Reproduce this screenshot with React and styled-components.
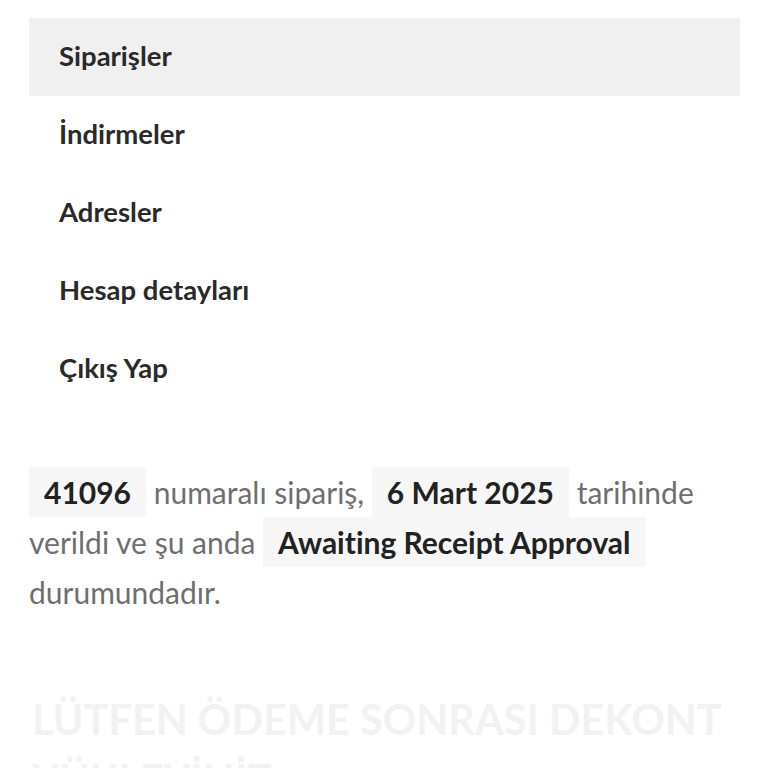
import React from 'react';
import styled, { createGlobalStyle } from 'styled-components';

const GlobalStyle = createGlobalStyle`
  html, body {
    margin: 0;
    padding: 0;
    background: #fff;
  }
  body {
    font-family: Lato, 'Noto Sans', sans-serif;
    -webkit-font-smoothing: antialiased;
    font-variant-ligatures: none;
  }
`;

const navItems = ['Siparişler', 'İndirmeler', 'Adresler', 'Hesap detayları', 'Çıkış Yap'];

export default function App() {
  return (
    <>
      <GlobalStyle />
      <Page>
        <Nav>
          {navItems.map((item, i) => (
            <NavItem key={item} $active={i === 0}>
              {item}
            </NavItem>
          ))}
        </Nav>
        <OrderInfo>
          <Mark>41096</Mark> numaralı sipariş, <Mark>6 Mart 2025</Mark> tarihinde verildi ve şu anda{' '}
          <Mark>Awaiting Receipt Approval</Mark> durumundadır.
        </OrderInfo>
        <Notice>LÜTFEN ÖDEME SONRASI DEKONT YÜKLEYİNİZ</Notice>
      </Page>
    </>
  );
}

const Page = styled.div`
  padding: 18px 28px 0 29px;
  height: 768px;
  overflow: hidden;
  box-sizing: border-box;
`;

const Nav = styled.ul`
  list-style: none;
  margin: 0;
  padding: 0;
`;

const NavItem = styled.li`
  height: 78px;
  box-sizing: border-box;
  padding: 0 0 4px 30px;
  display: flex;
  align-items: center;
  font-size: 27.5px;
  font-weight: 700;
  color: #2a2a2a;
  background: ${(p) => (p.$active ? '#f0f0f0' : 'transparent')};
`;

const OrderInfo = styled.p`
  margin: 59px 0 0;
  font-size: 30px;
  line-height: 50px;
  color: #6f6f6f;
`;

const Mark = styled.mark`
  display: inline-block;
  background: #f7f7f7;
  color: #222;
  font-weight: 700;
  padding: 0 15px;
  line-height: 50px;
`;

const Notice = styled.h2`
  margin: 72px 0 0;
  padding-left: 3px;
  font-size: 41.5px;
  line-height: 60px;
  font-weight: 700;
  text-transform: uppercase;
  color: #f2f2f2;
`;
